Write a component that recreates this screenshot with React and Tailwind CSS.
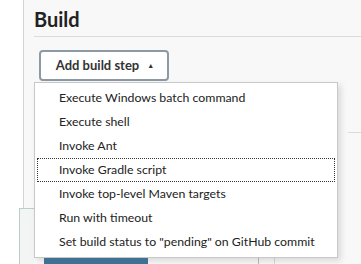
import { useState } from "react";

const steps = [
  "Execute Windows batch command",
  "Execute shell",
  "Invoke Ant",
  "Invoke Gradle script",
  "Invoke top-level Maven targets",
  "Run with timeout",
  'Set build status to "pending" on GitHub commit',
];

function App() {
  const [active] = useState(3);

  return (
    <div
      className="relative flex w-[361px] h-[264px] overflow-hidden bg-white"
      style={{ fontFamily: 'Lato, "Noto Sans", sans-serif' }}
    >
      <div className="w-[24px] shrink-0 border-r border-[#d4d4d4] bg-white" />

      <div className="flex-1 bg-[#f8f8f8] pl-[10px]">
        <h1 className="pt-[7px] h-[37px] border-b border-[#dcdcdc] text-[20px] font-bold leading-[24px] text-[#222]">
          Build
        </h1>

        <div className="pl-[5px] pt-[13px]">
          <button className="flex h-[31px] w-[130px] items-center justify-center gap-[8px] rounded-[4px] border-2 border-[#8c9aa6] bg-white pl-[2px] text-[13px] font-bold text-[#333]">
            Add build step
            <span className="text-[7px] leading-none">▲</span>
          </button>
        </div>

        <div className="mt-[51px] ml-[314px] border-t border-[#dcdcdc]" />

        <div className="relative mt-[75px] flex">
          <div className="-ml-[15px] h-[60px] w-[15px] border border-r-0 border-[#b9d0c4] bg-[#f3f5f4]" />
          <div className="mt-[48px] ml-[10px] h-[10px] w-[104px] bg-gradient-to-b from-[#4b82a8] to-[#3d6f93]" />
          <div className="mt-[48px] ml-[110px] h-[10px] w-[1px] bg-[#bdbdbd]" />
          <div className="mt-[48px] ml-[15px] h-[10px] w-[1px] bg-[#cfdcd3]" />
        </div>
      </div>

      <div className="absolute left-[34px] top-[82px] w-[304px] border border-[#c8c8c8] bg-white pt-[3px] pb-[3px] shadow-[3px_3px_6px_rgba(0,0,0,0.12)]">
        {steps.map((s, i) => (
          <div
            key={s}
            className={
              "mx-[2px] flex h-[24px] items-center whitespace-nowrap pl-[21px] text-[12.3px] text-[#222] " +
              (i === active ? "border border-dotted border-[#333]" : "border border-transparent")
            }
          >
            {s}
          </div>
        ))}
      </div>
    </div>
  );
}

export default App;
